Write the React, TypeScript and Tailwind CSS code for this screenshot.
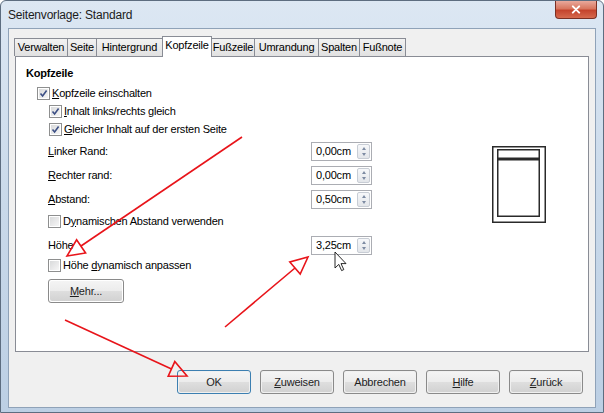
import React from 'react';

const tabs = [
  { label: 'Verwalten', w: 'w-[54px]' },
  { label: 'Seite', w: 'w-[30px]' },
  { label: 'Hintergrund', w: 'w-[67px]' },
  { label: 'Kopfzeile', w: 'w-[50px]', active: true },
  { label: 'Fußzeile', w: 'w-[44px]' },
  { label: 'Umrandung', w: 'w-[65px]' },
  { label: 'Spalten', w: 'w-[42px]' },
  { label: 'Fußnote', w: 'w-[47px]' },
];

const CheckBox = ({ checked }: { checked?: boolean }) => (
  <div className="w-[13px] h-[13px] border border-[#8e8f8f] bg-white p-[1px] shrink-0">
    <div className="w-full h-full bg-gradient-to-br from-[#d9dadb] to-[#f6f6f6] relative">
      {checked && (
        <svg viewBox="0 0 9 9" className="absolute inset-0 w-[9px] h-[9px]">
          <path d="M1.5 4.5 L3.6 7 L7.6 1.6" stroke="#3c4f85" strokeWidth="1.6" fill="none" />
        </svg>
      )}
    </div>
  </div>
);

const SpinField = ({ value }: { value: string }) => (
  <div className="w-[61px] h-[19px] border border-[#abadb3] bg-white flex items-center">
    <span className="flex-1 pl-[4px] text-[11px]">{value}</span>
    <div className="w-[13px] h-[15px] mr-[1px] border border-[#c8cdd5] rounded-[2px] bg-gradient-to-b from-[#f7f8fa] to-[#e3e6ea] flex flex-col items-center justify-center gap-[3px]">
      <div className="w-0 h-0 border-l-[2.5px] border-r-[2.5px] border-b-[3px] border-l-transparent border-r-transparent border-b-[#7d8ba3]" />
      <div className="w-0 h-0 border-l-[2.5px] border-r-[2.5px] border-t-[3px] border-l-transparent border-r-transparent border-t-[#7d8ba3]" />
    </div>
  </div>
);

const Button = ({ children, className = '', focused }: { children: React.ReactNode; className?: string; focused?: boolean }) => (
  <div
    className={`h-[24px] rounded-[3px] border ${focused ? 'border-[#3c7fb1]' : 'border-[#8a8a8a]'} p-[1px] ${className}`}
  >
    <div className="w-full h-full rounded-[2px] bg-[linear-gradient(#f4f4f4_0%,#ececec_48%,#dedede_52%,#d2d2d2_100%)] flex items-center justify-center text-[11px] text-[#1e1e1e]">
      {children}
    </div>
  </div>
);

export default function App() {
  return (
    <div
      className="relative w-[604px] h-[413px] overflow-hidden bg-gradient-to-b from-[#dce7f3] via-[#c9d9ea] to-[#bccfe4] border border-[#5d6d80] rounded-t-[6px] text-black tracking-[-0.2px]"
      style={{ fontFamily: '"Liberation Sans", Arial, sans-serif' }}
    >
      {/* title bar */}
      <div className="h-[27px] flex items-start justify-between pl-[7px] pr-[6px]">
        <span className="text-[12px] mt-[5px] text-[#1b1b1b]">Seitenvorlage: Standard</span>
        <div className="w-[42px] h-[18px] rounded-b-[4px] border border-t-0 border-[#7a3024] bg-[linear-gradient(#e9a99c_0%,#d8765f_45%,#c4442d_55%,#d66a4e_100%)] flex items-center justify-center">
          <svg viewBox="0 0 10 10" className="w-[10px] h-[9px]">
            <path d="M1.5 1.5 L8.5 8.5 M8.5 1.5 L1.5 8.5" stroke="#ffffff" strokeWidth="2.2" strokeLinecap="round" />
          </svg>
        </div>
      </div>

      {/* client area */}
      <div className="mx-[7px] h-[380px] bg-[#f0f0f0] border border-[#8fa2b8] flex flex-col">
        {/* tabs */}
        <div className="flex items-end pl-[5px] pt-[6px] h-[27px] relative z-10">
          {tabs.map((t) =>
            t.active ? (
              <div
                key={t.label}
                className={`${t.w} h-[21px] -ml-px -mb-px bg-white border border-b-0 border-[#898c95] flex items-center justify-center text-[11px] pb-[3px]`}
              >
                {t.label}
              </div>
            ) : (
              <div
                key={t.label}
                className={`${t.w} h-[18px] -ml-px first:ml-0 bg-gradient-to-b from-[#f2f2f2] to-[#e1e1e1] border border-b-0 border-[#898c95] flex items-center justify-center text-[11px]`}
              >
                {t.label}
              </div>
            )
          )}
        </div>

        {/* tab panel */}
        <div className="ml-[6px] w-[574px] h-[296px] bg-white border border-[#898c95] flex">
          <div className="pl-[10px] pt-[7px] w-[466px] flex flex-col text-[11px]">
            <div className="h-[18px] flex items-center font-bold">Kopfzeile</div>
            <div className="h-[18px] mt-[2px] flex items-center gap-[2px] pl-[11px]">
              <CheckBox checked />
              <span><u>K</u>opfzeile einschalten</span>
            </div>
            <div className="h-[18px] flex items-center gap-[2px] pl-[23px]">
              <CheckBox checked />
              <span><u>I</u>nhalt links/rechts gleich</span>
            </div>
            <div className="h-[18px] flex items-center gap-[2px] pl-[23px]">
              <CheckBox checked />
              <span><u>G</u>leicher Inhalt auf der ersten Seite</span>
            </div>
            <div className="h-[19px] mt-[4px] flex items-center pl-[22px]">
              <span className="w-[263px]"><u>L</u>inker Rand:</span>
              <SpinField value="0,00cm" />
            </div>
            <div className="h-[19px] mt-[5px] flex items-center pl-[22px]">
              <span className="w-[263px]"><u>R</u>echter rand:</span>
              <SpinField value="0,00cm" />
            </div>
            <div className="h-[19px] mt-[5px] flex items-center pl-[22px]">
              <span className="w-[263px]"><u>A</u>bstand:</span>
              <SpinField value="0,50cm" />
            </div>
            <div className="h-[18px] mt-[3px] flex items-center gap-[2px] pl-[22px]">
              <CheckBox />
              <span>D<u>y</u>namischen Abstand verwenden</span>
            </div>
            <div className="h-[19px] mt-[6px] flex items-center pl-[22px]">
              <span className="w-[263px]">Höhe</span>
              <SpinField value="3,25cm" />
            </div>
            <div className="h-[18px] mt-[1px] flex items-center gap-[2px] pl-[22px]">
              <CheckBox />
              <span>Höhe <u>d</u>ynamisch anpassen</span>
            </div>
            <div className="mt-[5px] pl-[22px]">
              <Button className="w-[76px]"><span><u>M</u>ehr...</span></Button>
            </div>
          </div>

          {/* page preview */}
          <div className="mt-[89px] ml-[10px]">
            <svg width="54" height="77" viewBox="0 0 54 77">
              <rect x="0.75" y="0.75" width="52.5" height="75.5" fill="white" stroke="#2a2a2a" strokeWidth="1.5" />
              <rect x="5.75" y="3.75" width="41.5" height="8.5" fill="white" stroke="#2a2a2a" strokeWidth="1.5" />
              <rect x="5.75" y="13.75" width="41.5" height="56.5" fill="white" stroke="#2a2a2a" strokeWidth="1.5" />
            </svg>
          </div>
        </div>

        {/* button row */}
        <div className="mt-[18px] flex justify-end gap-[9px] pr-[12px]">
          <Button className="w-[74px]" focused>OK</Button>
          <Button className="w-[74px]"><span><u>Z</u>uweisen</span></Button>
          <Button className="w-[74px]">Abbrechen</Button>
          <Button className="w-[74px]"><span><u>H</u>ilfe</span></Button>
          <Button className="w-[74px]"><span><u>Z</u>urück</span></Button>
        </div>
      </div>

      {/* annotation overlay */}
      <svg className="absolute left-[-1px] top-[-1px] pointer-events-none" width="604" height="413" viewBox="0 0 604 413">
        <g stroke="#e8141a" strokeWidth="1.6" fill="none" strokeLinejoin="miter">
          <line x1="242" y1="137" x2="81" y2="246" />
          <polygon points="67,256 85.6,253 76.6,239.8" />
          <line x1="225" y1="327" x2="295" y2="268" />
          <polygon points="308,257 300.2,274.1 289.8,261.9" />
          <line x1="65" y1="320" x2="171.5" y2="369" />
          <polygon points="187,376 168.2,376.2 174.8,361.6" />
        </g>
        {/* mouse cursor */}
        <path
          d="M335 252 L335 268 L338.8 264.4 L341.6 270.6 L343.8 269.6 L341 263.6 L346 263.6 Z"
          fill="white"
          stroke="#111"
          strokeWidth="0.9"
          strokeLinejoin="round"
        />
      </svg>
    </div>
  );
}
